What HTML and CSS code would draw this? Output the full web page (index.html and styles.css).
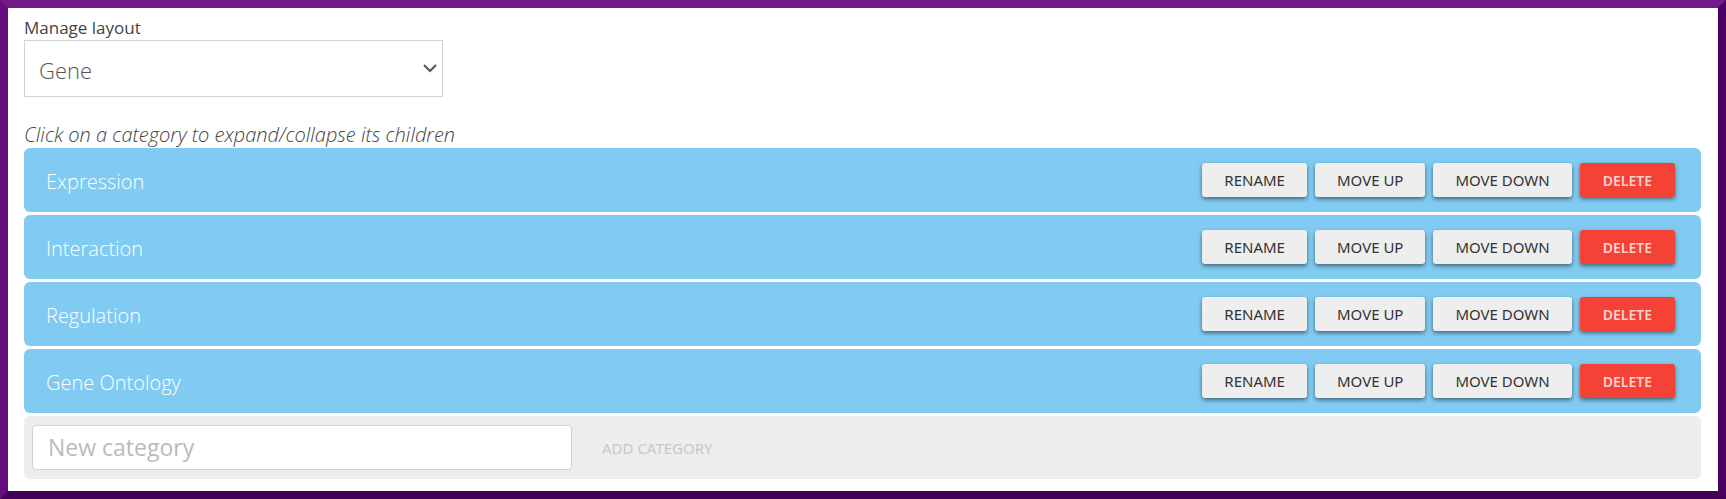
FILE: index.html
```html
<!DOCTYPE html>
<html lang="en">
<head>
<meta charset="utf-8">
<meta name="viewport" content="width=device-width, initial-scale=1">
<title>Manage layout</title>
<link rel="stylesheet" href="styles.css">
</head>
<body>
<main class="page">
  <label class="layout-label" for="layout">Manage layout</label>
  <div class="select-wrap">
    <select class="layout-select" id="layout"><option>Gene</option></select>
    <svg class="chevron" viewBox="0 0 16 16" aria-hidden="true"><path d="M2 4l6 6 6-6"/></svg>
  </div>
  <p class="hint">Click on a category to expand/collapse its children</p>
  <ul class="categories">
    <li class="category">
      <span class="name">Expression</span>
      <div class="actions"><button class="btn">Rename</button><button class="btn">Move up</button><button class="btn">Move down</button><button class="btn danger">Delete</button></div>
    </li>
    <li class="category">
      <span class="name">Interaction</span>
      <div class="actions"><button class="btn">Rename</button><button class="btn">Move up</button><button class="btn">Move down</button><button class="btn danger">Delete</button></div>
    </li>
    <li class="category">
      <span class="name">Regulation</span>
      <div class="actions"><button class="btn">Rename</button><button class="btn">Move up</button><button class="btn">Move down</button><button class="btn danger">Delete</button></div>
    </li>
    <li class="category">
      <span class="name">Gene Ontology</span>
      <div class="actions"><button class="btn">Rename</button><button class="btn">Move up</button><button class="btn">Move down</button><button class="btn danger">Delete</button></div>
    </li>
  </ul>
  <form class="new-category">
    <input class="new-input" type="text" placeholder="New category" aria-label="New category">
    <button class="add" type="button" disabled>Add category</button>
  </form>
</main>
</body>
</html>
```
FILE: styles.css
```css
* {
  box-sizing: border-box;
}

body {
  margin: 0;
  background: #fff;
  color: #444;
  font-family: "Open Sans", "Noto Sans", sans-serif;
}

.page {
  min-height: 100vh;
  padding: 8px 17px 8px 16px;
  border: 8px solid;
  border-color: #741b8c #4d0064 #430059 #650c7f;
}

.layout-label {
  display: block;
  font-size: 17px;
  line-height: 24px;
}

.select-wrap {
  display: grid;
  align-items: center;
  width: 25%;
  min-width: 240px;
}

.layout-select,
.chevron {
  grid-area: 1 / 1;
}

.layout-select {
  width: 100%;
  height: 57px;
  padding: 2px 14px 0;
  appearance: none;
  border: 1px solid #d3d3d3;
  border-radius: 0;
  background: #fff;
  color: #555;
  font: 300 22px "Open Sans", sans-serif;
}

.chevron {
  justify-self: end;
  width: 16px;
  height: 16px;
  margin: 0 5px;
  fill: none;
  stroke: #555;
  stroke-width: 2;
  pointer-events: none;
}

.hint {
  margin: 24px 0 0;
  font-size: 20px;
  font-style: italic;
  font-weight: 300;
  line-height: 27px;
}

.categories {
  display: grid;
  gap: 3px;
  margin: 0;
  padding: 0;
  list-style: none;
}

.category {
  display: flex;
  align-items: center;
  justify-content: space-between;
  min-height: 64px;
  padding: 0 26px 0 22px;
  border-radius: 6px;
  background: #81cbf2;
}

.name {
  padding-top: 2px;
  color: #fff;
  font-size: 20px;
  font-weight: 300;
}

.actions {
  display: flex;
  gap: 8px;
}

.btn {
  height: 34px;
  padding: 0 22px;
  border: 0;
  border-radius: 3px;
  background: #eee;
  box-shadow: 0 2px 4px rgba(0, 0, 0, 0.5);
  color: #333;
  font: 15px "Noto Sans", sans-serif;
  text-transform: uppercase;
}

.danger {
  padding: 0 23px;
  background: #f44336;
  color: #fcd0cd;
  font-size: 14px;
  font-weight: 600;
}

.new-category {
  display: flex;
  align-items: center;
  gap: 30px;
  margin-top: 3px;
  min-height: 63px;
  padding: 0 8px;
  border-radius: 6px;
  background: #ededed;
}

.new-input {
  width: 540px;
  height: 45px;
  padding: 0 15px 2px;
  border: 1px solid #d3d3d3;
  border-radius: 4px;
  background: #fff;
  color: #555;
  font: 23px "Open Sans", sans-serif;
}

.new-input::placeholder {
  color: #bbb;
}

.add {
  padding: 0;
  border: 0;
  background: none;
  color: #c8c8c8;
  font: 15px "Noto Sans", sans-serif;
  text-transform: uppercase;
}
```
